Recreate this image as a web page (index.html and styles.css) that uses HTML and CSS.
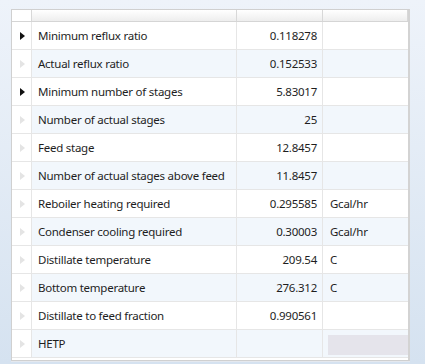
FILE: index.html
```html
<!DOCTYPE html>
<html lang="en">
<head>
    <meta charset="UTF-8">
    <title>Column results</title>
    <link rel="stylesheet" href="styles.css">
</head>
<body>
    <div class="grid">
        <div class="row header">
            <div class="cell head"></div>
            <div class="cell"></div>
            <div class="cell"></div>
            <div class="cell"></div>
        </div>
        <div class="row">
            <div class="cell head"><span class="arrow dark"></span></div>
            <div class="cell name">Minimum reflux ratio</div>
            <div class="cell value">0.118278</div>
            <div class="cell unit"></div>
        </div>
        <div class="row alt">
            <div class="cell head"><span class="arrow"></span></div>
            <div class="cell name">Actual reflux ratio</div>
            <div class="cell value">0.152533</div>
            <div class="cell unit"></div>
        </div>
        <div class="row">
            <div class="cell head"><span class="arrow dark"></span></div>
            <div class="cell name">Minimum number of stages</div>
            <div class="cell value">5.83017</div>
            <div class="cell unit"></div>
        </div>
        <div class="row alt">
            <div class="cell head"><span class="arrow"></span></div>
            <div class="cell name">Number of actual stages</div>
            <div class="cell value">25</div>
            <div class="cell unit"></div>
        </div>
        <div class="row">
            <div class="cell head"><span class="arrow"></span></div>
            <div class="cell name">Feed stage</div>
            <div class="cell value">12.8457</div>
            <div class="cell unit"></div>
        </div>
        <div class="row alt">
            <div class="cell head"><span class="arrow"></span></div>
            <div class="cell name">Number of actual stages above feed</div>
            <div class="cell value">11.8457</div>
            <div class="cell unit"></div>
        </div>
        <div class="row">
            <div class="cell head"><span class="arrow"></span></div>
            <div class="cell name">Reboiler heating required</div>
            <div class="cell value">0.295585</div>
            <div class="cell unit">Gcal/hr</div>
        </div>
        <div class="row alt">
            <div class="cell head"><span class="arrow"></span></div>
            <div class="cell name">Condenser cooling required</div>
            <div class="cell value">0.30003</div>
            <div class="cell unit">Gcal/hr</div>
        </div>
        <div class="row">
            <div class="cell head"><span class="arrow"></span></div>
            <div class="cell name">Distillate temperature</div>
            <div class="cell value">209.54</div>
            <div class="cell unit">C</div>
        </div>
        <div class="row alt">
            <div class="cell head"><span class="arrow"></span></div>
            <div class="cell name">Bottom temperature</div>
            <div class="cell value">276.312</div>
            <div class="cell unit">C</div>
        </div>
        <div class="row">
            <div class="cell head"><span class="arrow"></span></div>
            <div class="cell name">Distillate to feed fraction</div>
            <div class="cell value">0.990561</div>
            <div class="cell unit"></div>
        </div>
        <div class="row alt">
            <div class="cell head"><span class="arrow"></span></div>
            <div class="cell name">HETP</div>
            <div class="cell value"></div>
            <div class="cell unit"><div class="blank"></div></div>
        </div>
    </div>
</body>
</html>
```

FILE: styles.css
```css
*{
    margin: 0;
    padding: 0;
    box-sizing: border-box;
}
body {
    font-family: 'Noto Sans', 'Open Sans', sans-serif;
    font-size: 11.5px;
    letter-spacing: -0.25px;
    color: #1e1e1e;
    width: 425px;
    height: 364px;
    overflow: hidden;
    background: linear-gradient(to bottom, #eef3fa, #d5e2f0);
    padding: 9px 0 0 11px;
}
.grid {
    width: 399px;
    height: 352px;
    background: #fff;
    border: 1px solid #d0d0d0;
    border-right: 2px solid #d3d3d3;
    box-shadow: 0 1px 0 #e4e8ee;
}
.row {
    display: grid;
    grid-template-columns: 20px 205px 86px 85px;
    height: 28px;
}
.row.header {
    height: 12px;
    background: linear-gradient(to bottom, #ffffff, #eeeeee);
    border-bottom: 1px solid #d5d5d5;
}
.row.header .cell {
    border-bottom: none;
    border-right: 1px solid #d8d8d8;
}
.cell {
    border-right: 1px solid #e6e6e6;
    border-bottom: 1px solid #e6e6e6;
    display: flex;
    align-items: center;
    white-space: nowrap;
}
.cell.head {
    background: #fff;
    justify-content: center;
}
.row.alt .cell {
    background: #f2f7fc;
}
.row.alt .cell.head {
    background: #fff;
}
.name {
    padding-left: 6px;
}
.value {
    justify-content: flex-end;
    padding-right: 5px;
}
.unit {
    padding-left: 7px;
    border-right: none;
}
.arrow {
    width: 0;
    height: 0;
    border-left: 5px solid #e4e4e4;
    border-top: 4px solid transparent;
    border-bottom: 4px solid transparent;
    margin-left: 2px;
}
.arrow.dark {
    border-left-color: #111;
}
.blank {
    width: 80px;
    height: 20px;
    background: #e5e4eb;
    margin-left: -2px;
    margin-top: 2px;
}
```
